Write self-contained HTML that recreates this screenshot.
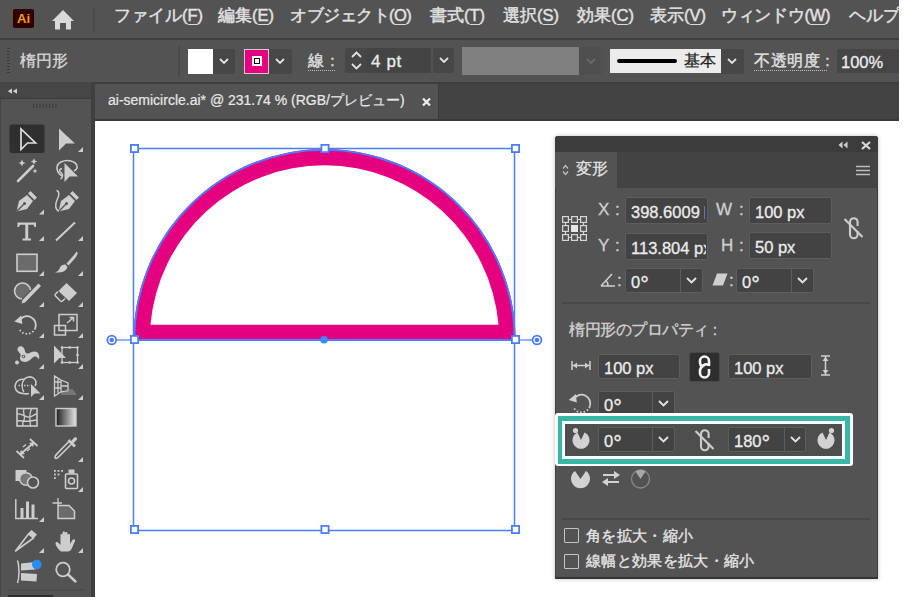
<!DOCTYPE html>
<html><head><meta charset="utf-8">
<style>
*{box-sizing:border-box;margin:0;padding:0}
html,body{width:922px;height:597px;overflow:hidden;background:#fff;font-family:"Liberation Sans",sans-serif;}
.a{position:absolute}
svg{display:block}
#menu{left:0;top:0;width:899px;height:39px;overflow:hidden;background:#535353;border-bottom:1px solid #414141}
.mi{position:absolute;top:5px;font-size:16.5px;color:#e2e2e2;white-space:nowrap;line-height:20px;-webkit-text-stroke:0.45px #e2e2e2;}
.mi u{text-decoration:none;border-bottom:1px solid #d8d8d8}
#ctrl{left:0;top:39px;width:899px;height:43px;background:#535353}
#tabrow{left:92px;top:82px;width:807px;height:39px;background:#434343}
#tab{left:95px;top:84px;width:344px;height:35px;background:#535353;border-right:1px solid #3a3a3a}
#tb{left:0;top:82px;width:91px;height:515px;background:#535353;border-left:1px solid #474747}
#tbgap{left:91px;top:82px;width:4px;height:515px;background:#3f3f3f}
#tbh{left:0;top:82px;width:91px;height:17px;background:#464646;border-bottom:1px solid #3d3d3d}
#canvas{left:95px;top:121px;width:827px;height:476px;background:#fff}
.fld{position:absolute;background:#474747;border:1px solid #4d4d4d;border-radius:2px;color:#e6e6e6;font-size:15px;line-height:24px;padding-left:6px;white-space:nowrap;overflow:hidden}
.dd{position:absolute;background:#474747;border:1px solid #4d4d4d;border-radius:2px}
.lbl{position:absolute;color:#cfcfcf;font-size:15px;white-space:nowrap}
#panel{left:555px;top:136px;width:323px;height:443px;background:#535353;border-radius:3px 3px 0 0;box-shadow:0 0 4px rgba(0,0,0,.25);border:1px solid #3e3e3e;border-bottom:2px solid #343434}
.ft{color:#ececec;white-space:nowrap;overflow:hidden;-webkit-text-stroke:0.3px #ececec}
.pl{color:#cfcfcf;font-size:17px;line-height:20px;white-space:nowrap;-webkit-text-stroke:0.3px #cfcfcf}
.dg{font-size:1.3em;line-height:0;position:relative;top:0.2em;margin-left:0px;-webkit-text-stroke:0.35px #ececec}
.pt{white-space:nowrap;-webkit-text-stroke:0.25px currentColor}
</style></head><body>
<div id="menu" class="a">
<div class="a" style="left:13px;top:9px;width:21px;height:19px;background:#300000;border-radius:2px;color:#ff9a00;font-weight:bold;font-size:13px;line-height:20px;text-align:center;letter-spacing:0px">Ai</div>
<svg class="a" style="left:51px;top:9px" width="24" height="21" viewBox="0 0 24 21"><path d="M12 1 L23 12 L20 12 L20 20.5 L15 20.5 L15 14 L9 14 L9 20.5 L4 20.5 L4 12 L1 12 Z" fill="#d9d9d9"/></svg>
<div class="a" style="left:93px;top:7px;width:2px;height:25px;background:#4a4a4a"></div>
<div class="mi" style="left:114px">ファイル(<u>F</u>)</div>
<div class="mi" style="left:218px">編集(<u>E</u>)</div>
<div class="mi" style="left:290px;letter-spacing:-0.5px">オブジェクト(<u>O</u>)</div>
<div class="mi" style="left:430px">書式(<u>T</u>)</div>
<div class="mi" style="left:503px">選択(<u>S</u>)</div>
<div class="mi" style="left:577px">効果(<u>C</u>)</div>
<div class="mi" style="left:650px">表示(<u>V</u>)</div>
<div class="mi" style="left:721px;letter-spacing:-0.3px">ウィンドウ(<u>W</u>)</div>
<div class="mi" style="left:849px">ヘルプ(<u>H</u>)</div>
</div>
<div id="ctrl" class="a">
<div class="a" style="left:7px;top:9px;width:3px;height:25px;background:repeating-linear-gradient(#3a3a3a 0 1.5px,#535353 1.5px 3px)"></div>
<div class="lbl" style="left:20px;top:12px;font-size:15.5px;color:#dadada;line-height:20px;-webkit-text-stroke:0.3px #dadada">楕円形</div>
<div class="a" style="left:178px;top:7px;width:2px;height:31px;background:#4a4a4a"></div>
<div class="a" style="left:188px;top:10px;width:25px;height:25px;background:#fff"></div>
<div class="dd" style="left:213px;top:10px;width:22px;height:25px;border:none;border-radius:0 2px 2px 0;padding:9px 0 0 6px"><svg width="10" height="6" viewBox="0 0 10 6"><path d="M1 1 L5 5 L9 1" fill="none" stroke="#e2e2e2" stroke-width="1.8"/></svg></div>
<div class="a" style="left:244px;top:10px;width:25px;height:25px;background:#e4007f;border:1px solid #cfcfcf"></div>
<div class="a" style="left:252px;top:17px;width:10px;height:10px;background:#fff;padding:2px"><div style="width:6px;height:6px;border:1.5px solid #111;background:#fff"></div></div>
<div class="dd" style="left:269px;top:10px;width:23px;height:25px;border:none;border-radius:0 2px 2px 0;padding:9px 0 0 6px"><svg width="10" height="6" viewBox="0 0 10 6"><path d="M1 1 L5 5 L9 1" fill="none" stroke="#e2e2e2" stroke-width="1.8"/></svg></div>
<div class="lbl" style="left:308px;top:12px;font-size:15.5px;color:#e0e0e0;line-height:20px;letter-spacing:1px;-webkit-text-stroke:0.4px #e0e0e0">線 :</div>
<div class="a" style="left:308px;top:31px;width:28px;height:1px;background:repeating-linear-gradient(90deg,#bdbdbd 0 1px,transparent 1px 2px)"></div>
<div class="dd" style="left:345px;top:9px;width:22px;height:25px;border:none;border-radius:2px 0 0 2px"><svg class="a" style="left:6px;top:3px" width="11" height="19" viewBox="0 0 11 19"><path d="M1 6 L5.5 1.5 L10 6 M1 13 L5.5 17.5 L10 13" fill="none" stroke="#e2e2e2" stroke-width="1.8"/></svg></div>
<div class="fld" style="left:367px;top:9px;width:64px;height:25px;border:none;background:#444;border-radius:0;line-height:27px;padding-left:4px;font-size:17px;letter-spacing:0.6px;color:#ececec;-webkit-text-stroke:0.3px #ececec">4 pt</div>
<div class="dd" style="left:433px;top:9px;width:21px;height:25px;border:none;padding:9px 0 0 6px"><svg width="10" height="6" viewBox="0 0 10 6"><path d="M1 1 L5 5 L9 1" fill="none" stroke="#e2e2e2" stroke-width="1.8"/></svg></div>
<div class="a" style="left:462px;top:8px;width:117px;height:28px;background:#808080"></div>
<div class="a" style="left:579px;top:8px;width:23px;height:28px;background:#4f4f4f;padding:11px 0 0 7px"><svg width="10" height="6" viewBox="0 0 10 6"><path d="M1 1 L5 5 L9 1" fill="none" stroke="#6a6a6a" stroke-width="1.8"/></svg></div>
<div class="a" style="left:610px;top:10px;width:111px;height:24px;background:#ececec"></div>
<div class="a" style="left:617px;top:20px;width:60px;height:4px;background:#000;border-radius:2px"></div>
<div class="lbl" style="left:684px;top:12px;font-size:15.5px;color:#1e1e1e;line-height:20px;-webkit-text-stroke:0.3px #1e1e1e">基本</div>
<div class="dd" style="left:721px;top:10px;width:23px;height:25px;border:none;border-radius:0 2px 2px 0;padding:9px 0 0 6px"><svg width="10" height="6" viewBox="0 0 10 6"><path d="M1 1 L5 5 L9 1" fill="none" stroke="#e2e2e2" stroke-width="1.8"/></svg></div>
<div class="lbl" style="left:754px;top:12px;font-size:15.5px;color:#e0e0e0;line-height:20px;letter-spacing:0.6px;-webkit-text-stroke:0.4px #e0e0e0">不透明度 :</div>
<div class="a" style="left:754px;top:31px;width:74px;height:1px;background:repeating-linear-gradient(90deg,#bdbdbd 0 1px,transparent 1px 2px)"></div>
<div class="fld" style="left:837px;top:10px;width:62px;height:24px;border:none;background:#464646;line-height:26px;padding-left:4px;font-size:16.5px;color:#ececec;-webkit-text-stroke:0.3px #ececec">100%</div>
</div>
<div class="a" style="left:0;top:38px;width:899px;height:2px;background:#3f3f3f"></div>
<div id="tabrow" class="a"></div>
<div id="tab" class="a">
<div class="a" style="left:13px;top:8px;font-size:14px;color:#e8e8e8;white-space:nowrap;line-height:16px;-webkit-text-stroke:0.2px #e8e8e8">ai-semicircle.ai* @ 231.74 % (RGB/プレビュー)</div>
<svg class="a" style="left:327px;top:14px" width="9" height="8" viewBox="0 0 9 8"><path d="M1 0.5 L8 7.5 M8 0.5 L1 7.5" stroke="#eeeeee" stroke-width="2.2"/></svg>
</div>
<div class="a" style="left:95px;top:119px;width:804px;height:2px;background:#393939"></div><div class="a" style="left:0;top:82px;width:899px;height:2px;background:#3e3e3e"></div>
<div id="tb" class="a"></div>
<div id="tbh" class="a"></div><div id="tbgap" class="a"></div>
<svg class="a" style="left:0;top:0" width="91" height="597" viewBox="0 0 91 597"><path d="M12 88.5 L7.8 91.2 L12 93.8 Z M17 88.5 L12.8 91.2 L17 93.8 Z" fill="#d0d0d0"/><g stroke="#3a3a3a" stroke-width="1"><line x1="33.5" y1="103.5" x2="33.5" y2="108"/><line x1="36.7" y1="103.5" x2="36.7" y2="108"/><line x1="39.9" y1="103.5" x2="39.9" y2="108"/><line x1="43.1" y1="103.5" x2="43.1" y2="108"/><line x1="46.3" y1="103.5" x2="46.3" y2="108"/><line x1="49.5" y1="103.5" x2="49.5" y2="108"/><line x1="52.7" y1="103.5" x2="52.7" y2="108"/><line x1="55.9" y1="103.5" x2="55.9" y2="108"/></g><line x1="8" y1="590" x2="84" y2="590" stroke="#474747" stroke-width="1"/><rect x="8" y="595" width="45" height="2" fill="#2e2e2e"/><rect x="9.5" y="124.5" width="35" height="28.5" rx="2.5" fill="#2f2f2f"/><path d="M21 129 L21 149.5 L27.5 143 L35.5 143 Z" fill="none" stroke="#dedede" stroke-width="1.7" stroke-linejoin="miter"/><path d="M59 128.5 L59 150.5 L66 143.5 L75 143.5 Z" fill="#cdcdcd"/><path d="M83 147 L83 152 L78 152 Z" fill="#cdcdcd"/><path d="M18 181 L33 166" stroke="#cdcdcd" stroke-width="2.6" stroke-linecap="round"/><path d="M22 159.5 L23.05 161.95 L25.5 163 L23.05 164.05 L22 166.5 L20.95 164.05 L18.5 163 L20.95 161.95 Z" fill="#cdcdcd"/><path d="M34 158.3 L34.96 160.54 L37.2 161.5 L34.96 162.46 L34 164.7 L33.04 162.46 L30.8 161.5 L33.04 160.54 Z" fill="#cdcdcd"/><path d="M35 168.5 L35.75 170.25 L37.5 171 L35.75 171.75 L35 173.5 L34.25 171.75 L32.5 171 L34.25 170.25 Z" fill="#cdcdcd"/><path d="M62 176 C56 172 55 165 61 162 C67 159 76 161 77 166 C77.5 168 76 170 74 171" fill="none" stroke="#cdcdcd" stroke-width="1.6"/><path d="M62 169 C59 168 59 172 61.5 173 C63 174 63 178 60.5 179" fill="none" stroke="#cdcdcd" stroke-width="1.5"/><path d="M64.5 163 L64.5 182 L69.5 176.5 L78 176.5 Z" fill="#cdcdcd"/><g transform="translate(16,190)"><path d="M0.5 21.5 L3 11 L11 5 L17 11 L11 19 Z" fill="#cdcdcd"/><path d="M12 3.5 L14.5 1 L21 7.5 L18.5 10 Z" fill="#cdcdcd"/><path d="M0.8 21.2 L8 14" stroke="#535353" stroke-width="1.3"/><circle cx="8.5" cy="13.5" r="1.5" fill="#535353"/></g><path d="M44 209.5 L44 214.5 L39 214.5 Z" fill="#cdcdcd"/><g transform="translate(58,190)"><path d="M0.5 21.5 L3 11 L11 5 L17 11 L11 19 Z" fill="#cdcdcd"/><path d="M12 3.5 L14.5 1 L21 7.5 L18.5 10 Z" fill="#cdcdcd"/><path d="M0.8 21.2 L8 14" stroke="#535353" stroke-width="1.3"/><circle cx="8.5" cy="13.5" r="1.5" fill="#535353"/><path d="M-1.5 0.5 C2 1 1 6 -1 10 C-3 14 -3 20 1 21" fill="none" stroke="#cdcdcd" stroke-width="1.5"/></g><path d="M17.5 222.5 H36 V227 H34.5 L33.5 224.8 H28.2 V238.5 H31 V240.5 H22.5 V238.5 H25.3 V224.8 H20 L19 227 H17.5 Z" fill="#cdcdcd"/><path d="M44 236 L44 241 L39 241 Z" fill="#cdcdcd"/><path d="M56 240.5 L75 222.5" stroke="#cdcdcd" stroke-width="2"/><path d="M83 236 L83 241 L78 241 Z" fill="#cdcdcd"/><rect x="17" y="254.3" width="20" height="17" fill="#6b6b6b" stroke="#cdcdcd" stroke-width="1.6"/><path d="M44 271 L44 276 L39 276 Z" fill="#cdcdcd"/><path d="M76.5 251.5 C75 254 70 260 66.5 263.5 L68.5 265.5 C72 262 77.5 256 77.8 253 Z" fill="#cdcdcd"/><path d="M65.5 264.5 C62 264 60 266.5 59.5 268.5 C59 270.5 57 271.5 55 272.5 C60 273 66 272 67.5 267 Z" fill="#cdcdcd"/><path d="M83 271 L83 276 L78 276 Z" fill="#cdcdcd"/><path d="M22 299 A8 8 0 1 1 30.5 290" fill="#6b6b6b" stroke="#cdcdcd" stroke-width="1.6"/><path d="M38.5 283.5 L41 286 L25 302.5 L21.5 303.5 L22.5 300 Z" fill="#cdcdcd"/><path d="M44 302 L44 307 L39 307 Z" fill="#cdcdcd"/><path d="M66.5 283 L77 293 L69 301 L58.5 291 Z" fill="#cdcdcd"/><path d="M58 291.5 L55.5 294 C55 294.5 55 295.5 55.5 296 L60.5 301 C61 301.5 62 301.5 62.5 301 L65 298.5" fill="none" stroke="#cdcdcd" stroke-width="1.5"/><path d="M83 302 L83 307 L78 307 Z" fill="#cdcdcd"/><path d="M19.79 319.95 A8.8 8.8 0 0 1 35.27 328.01" fill="none" stroke="#cfcfcf" stroke-width="1.8"/><path d="M35.27 328.01 A8.8 8.8 0 0 1 19.79 330.05" fill="none" stroke="#cfcfcf" stroke-width="1.8" stroke-dasharray="1.6 1.9"/><path d="M14.29 321.45 L21.29 315.45 L22.29 323.95 Z" fill="#cfcfcf"/><path d="M44 333 L44 338 L39 338 Z" fill="#cdcdcd"/><rect x="54.5" y="325.5" width="11" height="9.5" fill="none" stroke="#cdcdcd" stroke-width="1.5"/><rect x="59" y="314.5" width="18" height="16" fill="none" stroke="#cdcdcd" stroke-width="1.5"/><path d="M67 323 L73.5 317.5 M69.5 317.5 H73.5 V321.5" fill="none" stroke="#cdcdcd" stroke-width="1.5"/><path d="M83 333 L83 338 L78 338 Z" fill="#cdcdcd"/><path d="M17.5 350 C17 346.5 21 345 23.5 347.5 C25 349 24.5 351.5 26 353 C28 355 31 351.5 34.5 351.5 C38 351.5 40 355 39 359.5 C38 357.5 36.5 356 34.5 356.5 C31.5 357.5 29.5 362 25 362 C21 362 19 359 20.5 356 C21.5 354 19 353 17.5 350 Z" fill="#cdcdcd"/><circle cx="23.5" cy="356.5" r="1.8" fill="#535353"/><circle cx="23.5" cy="356.5" r="0.9" fill="#cdcdcd"/><circle cx="17" cy="362.5" r="2" fill="#cdcdcd"/><path d="M44 364 L44 369 L39 369 Z" fill="#cdcdcd"/><path d="M54 345.5 L54 363.5 L59.5 358 L66 358 Z" fill="#cdcdcd"/><rect x="62" y="347.5" width="15.5" height="15" fill="none" stroke="#cdcdcd" stroke-width="1.3"/><circle cx="62" cy="347.5" r="1.3" fill="#cdcdcd"/><circle cx="77.5" cy="347.5" r="1.3" fill="#cdcdcd"/><circle cx="62" cy="362.5" r="1.3" fill="#cdcdcd"/><circle cx="77.5" cy="362.5" r="1.3" fill="#cdcdcd"/><circle cx="69.7" cy="347.5" r="1.3" fill="#cdcdcd"/><circle cx="77.5" cy="355" r="1.3" fill="#cdcdcd"/><circle cx="69.7" cy="362.5" r="1.3" fill="#cdcdcd"/><path d="M83 364 L83 369 L78 369 Z" fill="#cdcdcd"/><path d="M29 393.5 C27 394 25 394 23 393.5 C16 393 14 388 15.5 384 C17 380 21 378.5 24 379.5 C26 376.5 31 376 34 378.5 C36.5 380.5 36.5 384 35 386" fill="none" stroke="#cdcdcd" stroke-width="1.6"/><path d="M24 380 C21.5 382 21.5 389 24 392" fill="none" stroke="#cdcdcd" stroke-width="1.2"/><path d="M18.5 385.5 H30" stroke="#cdcdcd" stroke-width="1.4" stroke-dasharray="1.4 1.4"/><path d="M31 384 L31 397 L34.5 393.5 L40.5 393.5 Z" fill="#cdcdcd"/><path d="M44 395 L44 400 L39 400 Z" fill="#cdcdcd"/><path d="M54.5 376 L54.5 396 L61 392 L61 380 Z M54.5 382 H61 M54.5 388 H61 M58 378 V394 M61 380 L68 383 V391 L61 392 M61 386 H68" fill="none" stroke="#cdcdcd" stroke-width="1.3"/><path d="M61 394 H76 M66 390 H73 M64 392 H75" stroke="#9a9a9a" stroke-width="1.2"/><path d="M83 395 L83 400 L78 400 Z" fill="#cdcdcd"/><rect x="17" y="408.5" width="20" height="17.5" fill="none" stroke="#cdcdcd" stroke-width="1.6"/><path d="M17 414 C23 413 25 418 30 417 C33 416 35 414 37 414 M24 408.5 C22 413 26 417 24 420 C22.5 422 22.5 424 23 426 M32 408.5 C29 412 30 417 30 421 L30.5 426 M17 421 C21 420 25 422 30 421 L37 420" fill="none" stroke="#cdcdcd" stroke-width="1.3"/><defs><linearGradient id="gr" x1="0" x2="1"><stop offset="0" stop-color="#1e1e1e"/><stop offset="1" stop-color="#e6e6e6"/></linearGradient></defs><rect x="56" y="408.5" width="20" height="17.5" fill="url(#gr)" stroke="#cdcdcd" stroke-width="1.4"/><path d="M16.5 451 L24 458 M30 439 L37.5 446 M20 454.5 L34 442.5" fill="none" stroke="#cdcdcd" stroke-width="1.8"/><path d="M34.5 442 L29 443 L33 447 Z M19.5 455 L25 454 L21 450 Z" fill="#cdcdcd"/><path d="M23 447 L26 444.5 M27 451 L30 448.5" stroke="#cdcdcd" stroke-width="1.3"/><path d="M71 444.5 L58 457.5 C56.5 459 55 458.5 55 457 C55 455.5 56 454.5 69 441.5" fill="none" stroke="#cdcdcd" stroke-width="1.7"/><path d="M67.5 441 L74 447.5 L76 445.5 L73.5 443 L77 439.5 C77.5 438 76 436.5 74.5 437.5 L71 441 L69.5 439 Z" fill="#cdcdcd"/><path d="M83 457 L83 462 L78 462 Z" fill="#cdcdcd"/><rect x="15.5" y="470" width="11" height="11" fill="#cdcdcd"/><circle cx="26" cy="479" r="6.3" fill="#777" stroke="#cdcdcd" stroke-width="1.4"/><circle cx="33" cy="482.5" r="5.5" fill="#535353" stroke="#cdcdcd" stroke-width="1.6"/><rect x="54.0" y="470.0" width="1.8" height="1.8" fill="#cdcdcd"/><rect x="57.6" y="470.0" width="1.8" height="1.8" fill="#cdcdcd"/><rect x="61.2" y="470.0" width="1.8" height="1.8" fill="#cdcdcd"/><rect x="54.0" y="473.6" width="1.8" height="1.8" fill="#cdcdcd"/><rect x="57.6" y="473.6" width="1.8" height="1.8" fill="#cdcdcd"/><rect x="54.0" y="477.2" width="1.8" height="1.8" fill="#cdcdcd"/><rect x="65.5" y="474" width="12" height="14.5" rx="1" fill="none" stroke="#cdcdcd" stroke-width="1.6"/><rect x="68.5" y="469.5" width="6" height="4" fill="#cdcdcd"/><circle cx="71.5" cy="481" r="3" fill="none" stroke="#cdcdcd" stroke-width="1.6"/><path d="M83 487 L83 492 L78 492 Z" fill="#cdcdcd"/><path d="M15.8 499 V518.5 H38" fill="none" stroke="#cdcdcd" stroke-width="1.5"/><rect x="20.5" y="508" width="3" height="10" fill="#cdcdcd"/><rect x="26" y="501.5" width="3" height="16.5" fill="#cdcdcd"/><rect x="31.5" y="504.5" width="3" height="13.5" fill="#cdcdcd"/><path d="M44 517 L44 522 L39 522 Z" fill="#cdcdcd"/><path d="M58 498 V505 M52.5 503 H62" stroke="#cdcdcd" stroke-width="1.3"/><path d="M58 505.5 H69 L74.5 511 V518.5 H58 Z" fill="#6b6b6b" stroke="#cdcdcd" stroke-width="1.5"/><path d="M15.5 551 L28.5 534 L33.5 538 Z" fill="none" stroke="#cdcdcd" stroke-width="1.6" stroke-linejoin="round"/><path d="M28 533.5 L31.5 530 L37 534.5 L33.5 538.5 Z" fill="#cdcdcd"/><path d="M44 548 L44 553 L39 553 Z" fill="#cdcdcd"/><path d="M61 551.5 C58 549 55.5 545 55.5 543.5 C55.5 542 57 541.5 58.5 543 L60.5 545 V535 C60.5 533.5 62.5 533.5 62.5 535 V541 V532.5 C62.5 531 65 531 65 532.5 V541 V533 C65 531.5 67.5 531.5 67.5 533 V541 V535 C67.5 533.5 70 533.5 70 535 V544 L72.5 540 C73.5 538.5 75.5 539 75 541 L71.5 549 C70.5 551 69 551.5 67 551.5 Z" fill="#cdcdcd"/><path d="M83 548 L83 553 L78 553 Z" fill="#cdcdcd"/><path d="M17.5 560.5 C19.5 566 19.5 577 17.5 583" fill="none" stroke="#cdcdcd" stroke-width="1.5"/><path d="M21 563.5 L35 562 L35.5 569.5 L21 570.5 Z M21 573 L37 574 L36.5 581.5 L21 580.5 Z" fill="#cdcdcd"/><circle cx="36.8" cy="564.5" r="4.8" fill="#2b8ded"/><circle cx="63" cy="569.5" r="6.8" fill="none" stroke="#cdcdcd" stroke-width="1.8"/><path d="M68 574.5 L75.5 581.5" stroke="#cdcdcd" stroke-width="2.4" stroke-linecap="round"/></svg>
<div id="canvas" class="a"></div>
<svg class="a" style="left:0;top:0" width="922" height="597" viewBox="0 0 922 597">
<path d="M133.5,340 A191,191 0 0 1 515.5,340 Z M150.46,324.8 A174.7,174.7 0 0 1 498.54,324.8 Z" fill="#e4007f" fill-rule="evenodd"/>
<path d="M134.3,340 A190.2,190.2 0 0 1 514.7,340 Z" fill="none" stroke="#4d7cff" stroke-width="1.8"/>
<rect x="133.5" y="148.5" width="381" height="382" fill="none" stroke="#4d7cff" stroke-width="1.5"/>
<line x1="112" y1="340" x2="134" y2="340" stroke="#4d7cff" stroke-width="1.2"/>
<line x1="515" y1="340" x2="537" y2="340" stroke="#4d7cff" stroke-width="1.2"/>
<circle cx="111.7" cy="340" r="4.4" fill="#fff" stroke="#4d7cff" stroke-width="1.8"/><circle cx="111.7" cy="340" r="2.3" fill="#4d7cff"/>
<circle cx="537" cy="340" r="4.4" fill="#fff" stroke="#4d7cff" stroke-width="1.8"/><circle cx="537" cy="340" r="2.3" fill="#4d7cff"/>
<circle cx="324" cy="339.8" r="3.8" fill="#3f86ff"/>
<rect x="130.9" y="144.9" width="7.2" height="7.2" fill="#fff" stroke="#4d7cff" stroke-width="1.8"/><rect x="130.9" y="335.9" width="7.2" height="7.2" fill="#fff" stroke="#4d7cff" stroke-width="1.8"/><rect x="130.9" y="525.9" width="7.2" height="7.2" fill="#fff" stroke="#4d7cff" stroke-width="1.8"/><rect x="321.4" y="144.9" width="7.2" height="7.2" fill="#fff" stroke="#4d7cff" stroke-width="1.8"/><rect x="321.4" y="525.9" width="7.2" height="7.2" fill="#fff" stroke="#4d7cff" stroke-width="1.8"/><rect x="511.9" y="144.9" width="7.2" height="7.2" fill="#fff" stroke="#4d7cff" stroke-width="1.8"/><rect x="511.9" y="335.9" width="7.2" height="7.2" fill="#fff" stroke="#4d7cff" stroke-width="1.8"/><rect x="511.9" y="525.9" width="7.2" height="7.2" fill="#fff" stroke="#4d7cff" stroke-width="1.8"/>
</svg>
<div id="panel" class="a"></div>
<div class="a" style="left:555px;top:136px;width:323px;height:16px;background:#3c3c3c;border-radius:3px 3px 0 0"></div><svg class="a" style="left:838px;top:141px" width="10" height="8" viewBox="0 0 10 8"><path d="M4.5 0.5 L0.5 4 L4.5 7.5 Z M9.5 0.5 L5.5 4 L9.5 7.5 Z" fill="#cfcfcf"/></svg><svg class="a" style="left:861px;top:141px" width="10" height="9" viewBox="0 0 10 9"><path d="M1 1 L9 8 M9 1 L1 8" stroke="#d8d8d8" stroke-width="2.3"/></svg><div class="a" style="left:555px;top:152px;width:323px;height:36px;background:#434343"></div><div class="a" style="left:555px;top:152px;width:62px;height:36px;background:#535353"></div><svg class="a" style="left:562px;top:164px" width="7" height="12" viewBox="0 0 7 12"><path d="M1 4.5 L3.5 1.5 L6 4.5 M1 7.5 L3.5 10.5 L6 7.5" fill="none" stroke="#bdbdbd" stroke-width="1.3"/></svg><div class="a pt" style="left:576px;top:159px;font-size:15.5px;line-height:20px;color:#e6e6e6">変形</div><svg class="a" style="left:856px;top:165px" width="14" height="11" viewBox="0 0 14 11"><path d="M0 1.5 H14 M0 5.5 H14 M0 9.5 H14" stroke="#bdbdbd" stroke-width="1.4"/></svg><svg class="a" style="left:561px;top:215px" width="28" height="27" viewBox="0 0 28 27"><rect x="1.6" y="1.6" width="5.8" height="5.8" fill="none" stroke="#d6d6d6" stroke-width="1.2"/><rect x="1.6" y="10.6" width="5.8" height="5.8" fill="none" stroke="#d6d6d6" stroke-width="1.2"/><rect x="1.6" y="19.6" width="5.8" height="5.8" fill="none" stroke="#d6d6d6" stroke-width="1.2"/><rect x="10.6" y="1.6" width="5.8" height="5.8" fill="none" stroke="#d6d6d6" stroke-width="1.2"/><rect x="10" y="10" width="7" height="7" fill="#e6e6e6"/><rect x="10.6" y="19.6" width="5.8" height="5.8" fill="none" stroke="#d6d6d6" stroke-width="1.2"/><rect x="19.6" y="1.6" width="5.8" height="5.8" fill="none" stroke="#d6d6d6" stroke-width="1.2"/><rect x="19.6" y="10.6" width="5.8" height="5.8" fill="none" stroke="#d6d6d6" stroke-width="1.2"/><rect x="19.6" y="19.6" width="5.8" height="5.8" fill="none" stroke="#d6d6d6" stroke-width="1.2"/><path d="M8 4.5 H10 M17 4.5 H19 M8 22.5 H10 M17 22.5 H19 M4.5 8 V10 M4.5 17 V19 M22.5 8 V10 M22.5 17 V19" stroke="#d6d6d6" stroke-width="1.2"/></svg><div class="a pl" style="left:598px;top:200px">X</div><div class="a pl" style="left:615px;top:200px">:</div><div class="a pl" style="left:598px;top:236px">Y</div><div class="a pl" style="left:615px;top:236px">:</div><div class="a" style="left:625px;top:197px;width:83px;height:27px;background:#434343;border:1px solid #5d5d5d;border-radius:2px"></div><div class="a ft" style="left:631px;top:200px;width:75px;height:23px;line-height:25px;font-size:16.5px">398.6009</div><div class="a" style="left:704px;top:206px;width:1px;height:13px;background:#6b6bd0"></div><div class="a" style="left:625px;top:233px;width:83px;height:27px;background:#434343;border:1px solid #5d5d5d;border-radius:2px"></div><div class="a ft" style="left:631px;top:236px;width:75px;height:23px;line-height:25px;font-size:16.5px">113.804 px</div><div class="a pl" style="left:716px;top:200px">W</div><div class="a pl" style="left:739px;top:200px">:</div><div class="a pl" style="left:721px;top:236px">H</div><div class="a pl" style="left:739px;top:236px">:</div><div class="a" style="left:749px;top:197px;width:83px;height:27px;background:#434343;border:1px solid #5d5d5d;border-radius:2px"></div><div class="a ft" style="left:755px;top:200px;width:75px;height:23px;line-height:25px;font-size:16.5px">100 px</div><div class="a" style="left:749px;top:232px;width:83px;height:27px;background:#434343;border:1px solid #5d5d5d;border-radius:2px"></div><div class="a ft" style="left:755px;top:235px;width:75px;height:23px;line-height:25px;font-size:16.5px">50 px</div><svg class="a" style="left:843px;top:216px" width="22" height="24" viewBox="0 0 22 24"><path d="M7 12 V6 A3.8 3.8 0 0 1 14.6 6 V10 M7 12 V18.5 A3.8 3.8 0 0 0 14.6 18.5 V15" fill="none" stroke="#cdcdcd" stroke-width="2.1"/><path d="M1.5 3 L19.5 21" stroke="#cdcdcd" stroke-width="2.1"/></svg><svg class="a" style="left:600px;top:272px" width="17" height="15" viewBox="0 0 17 15"><path d="M1 14 L15 14 M1 14 L12 2 M8 14 A7 7 0 0 0 6 8.5" fill="none" stroke="#cfcfcf" stroke-width="1.5"/></svg><div class="a pl" style="left:617px;top:271px">:</div><div class="a" style="left:625px;top:268px;width:78px;height:25px;background:#434343;border:1px solid #5d5d5d;border-radius:2px"></div><div class="a ft" style="left:631px;top:271px;width:47px;height:21px;line-height:23px;font-size:16.5px">0<span class=dg>°</span></div><div class="a" style="left:680px;top:269px;width:1px;height:23px;background:#5d5d5d"></div><svg class="a" style="left:686px;top:277px" width="11" height="7" viewBox="0 0 11 7"><path d="M1 1 L5.5 5.5 L10 1" fill="none" stroke="#e2e2e2" stroke-width="1.9"/></svg><svg class="a" style="left:712px;top:273px" width="16" height="13" viewBox="0 0 16 13"><path d="M5 0.5 H15.5 L11 12.5 H0.5 Z" fill="#cfcfcf"/></svg><div class="a pl" style="left:729px;top:271px">:</div><div class="a" style="left:736px;top:268px;width:78px;height:25px;background:#434343;border:1px solid #5d5d5d;border-radius:2px"></div><div class="a ft" style="left:742px;top:271px;width:47px;height:21px;line-height:23px;font-size:16.5px">0<span class=dg>°</span></div><div class="a" style="left:791px;top:269px;width:1px;height:23px;background:#5d5d5d"></div><svg class="a" style="left:797px;top:277px" width="11" height="7" viewBox="0 0 11 7"><path d="M1 1 L5.5 5.5 L10 1" fill="none" stroke="#e2e2e2" stroke-width="1.9"/></svg><div class="a" style="left:562px;top:302px;width:308px;height:2px;background:#474747"></div><div class="a pt" style="left:569px;top:320px;font-size:15.5px;line-height:20px;color:#d0d0d0;letter-spacing:-0.45px;-webkit-text-stroke:0.35px #d0d0d0">楕円形のプロパティ :</div><svg class="a" style="left:571px;top:360px" width="20" height="11" viewBox="0 0 20 11"><path d="M1 1 V10 M19 1 V10 M1 5.5 H19" stroke="#cfcfcf" stroke-width="1.5"/><path d="M2 5.5 L6 2.5 V8.5 Z M18 5.5 L14 2.5 V8.5 Z" fill="#cfcfcf"/></svg><div class="a" style="left:598px;top:354px;width:82px;height:25px;background:#434343;border:1px solid #5d5d5d;border-radius:2px"></div><div class="a ft" style="left:604px;top:357px;width:74px;height:21px;line-height:23px;font-size:16.5px">100 px</div><div class="a" style="left:689px;top:352px;width:31px;height:30px;background:#2e2e2e;border:1px solid #484848;border-radius:3px"></div><svg class="a" style="left:696px;top:354px" width="16" height="26" viewBox="0 0 16 26"><path d="M6.5 13 C4.5 12 4 10.5 4 8 V7 A4.5 4.5 0 0 1 13 7 V12" fill="none" stroke="#f4f4f4" stroke-width="2.6"/><path d="M12.5 11 C11 10 10 10 9 10.5 C6 12 4 14.5 4 17 V19 A4.5 4.5 0 0 0 13 19 V15" fill="none" stroke="#f4f4f4" stroke-width="2.6"/></svg><div class="a" style="left:728px;top:354px;width:84px;height:25px;background:#434343;border:1px solid #5d5d5d;border-radius:2px"></div><div class="a ft" style="left:734px;top:357px;width:76px;height:21px;line-height:23px;font-size:16.5px">100 px</div><svg class="a" style="left:820px;top:355px" width="11" height="21" viewBox="0 0 11 21"><path d="M1 1 H10 M1 20 H10 M5.5 1 V20" stroke="#cfcfcf" stroke-width="1.5"/><path d="M5.5 2 L2.5 6 H8.5 Z M5.5 19 L2.5 15 H8.5 Z" fill="#cfcfcf"/></svg><svg class="a" style="left:568px;top:391px" width="25" height="25" viewBox="0 0 25 25"><path d="M6.29 7.45 A8.8 8.8 0 0 1 21.77 15.51" fill="none" stroke="#cfcfcf" stroke-width="1.8"/><path d="M21.77 15.51 A8.8 8.8 0 0 1 6.29 17.55" fill="none" stroke="#cfcfcf" stroke-width="1.8" stroke-dasharray="1.6 1.9"/><path d="M0.79 8.95 L7.79 2.95 L8.79 11.45 Z" fill="#cfcfcf"/></svg><div class="a" style="left:598px;top:391px;width:77px;height:25px;background:#434343;border:1px solid #5d5d5d;border-radius:2px"></div><div class="a ft" style="left:604px;top:394px;width:46px;height:21px;line-height:23px;font-size:16.5px">0<span class=dg>°</span></div><div class="a" style="left:652px;top:392px;width:1px;height:23px;background:#5d5d5d"></div><svg class="a" style="left:658px;top:400px" width="11" height="7" viewBox="0 0 11 7"><path d="M1 1 L5.5 5.5 L10 1" fill="none" stroke="#e2e2e2" stroke-width="1.9"/></svg><div class="a" style="left:555px;top:413px;width:298px;height:53px;background:#fff;border-radius:3px"></div><div class="a" style="left:558px;top:416px;width:292px;height:48px;background:#38b6a6"></div><div class="a" style="left:562px;top:421px;width:283px;height:38px;background:#fff"></div><div class="a" style="left:565px;top:424px;width:277px;height:32px;background:#4e4e4e"></div><svg class="a" style="left:571px;top:427px" width="20" height="23" viewBox="0 0 20 23"><path d="M10 13 L6.5 5.5 A8.5 8.5 0 1 0 13.5 5.5 Z" fill="#d2d2d2"/><circle cx="4.5" cy="3.5" r="2.6" fill="#d2d2d2"/></svg><div class="a" style="left:598px;top:427px;width:77px;height:25px;background:#434343;border:1px solid #5d5d5d;border-radius:2px"></div><div class="a ft" style="left:604px;top:430px;width:46px;height:21px;line-height:23px;font-size:16.5px">0<span class=dg>°</span></div><div class="a" style="left:652px;top:428px;width:1px;height:23px;background:#5d5d5d"></div><svg class="a" style="left:658px;top:436px" width="11" height="7" viewBox="0 0 11 7"><path d="M1 1 L5.5 5.5 L10 1" fill="none" stroke="#e2e2e2" stroke-width="1.9"/></svg><svg class="a" style="left:694px;top:428px" width="22" height="24" viewBox="0 0 22 24"><path d="M7 12 V6 A3.8 3.8 0 0 1 14.6 6 V10 M7 12 V18.5 A3.8 3.8 0 0 0 14.6 18.5 V15" fill="none" stroke="#cdcdcd" stroke-width="2.1"/><path d="M1.5 3 L19.5 21" stroke="#cdcdcd" stroke-width="2.1"/></svg><div class="a" style="left:728px;top:427px;width:78px;height:25px;background:#434343;border:1px solid #5d5d5d;border-radius:2px"></div><div class="a ft" style="left:734px;top:430px;width:48px;height:21px;line-height:23px;font-size:16.5px">180<span class=dg>°</span></div><div class="a" style="left:784px;top:428px;width:1px;height:23px;background:#5d5d5d"></div><svg class="a" style="left:790px;top:436px" width="11" height="7" viewBox="0 0 11 7"><path d="M1 1 L5.5 5.5 L10 1" fill="none" stroke="#e2e2e2" stroke-width="1.9"/></svg><svg class="a" style="left:816px;top:427px" width="20" height="23" viewBox="0 0 20 23"><path d="M10 13 L6.5 5.5 A8.5 8.5 0 1 0 13.5 5.5 Z" fill="#d2d2d2" transform="scale(-1,1) translate(-20,0)"/><circle cx="15.5" cy="3.5" r="2.6" fill="#d2d2d2"/></svg><svg class="a" style="left:570px;top:469px" width="21" height="20" viewBox="0 0 21 20"><path d="M10.5 10 L5 2 A9.5 9.5 0 1 0 16 2 Z" fill="#d2d2d2"/></svg><svg class="a" style="left:601px;top:470px" width="20" height="17" viewBox="0 0 20 17"><path d="M2 5 H16 M18 12 H4" stroke="#d2d2d2" stroke-width="2.2"/><path d="M19 5 L13 1 V9 Z M1 12 L7 8 V16 Z" fill="#d2d2d2"/></svg><svg class="a" style="left:630px;top:469px" width="21" height="20" viewBox="0 0 21 20"><circle cx="10.5" cy="10" r="9" fill="none" stroke="#8a8a8a" stroke-width="1.3"/><path d="M10.5 10 L5.5 2.5 A9 9 0 0 1 15.5 2.5 Z" fill="#a8a8a8"/></svg><div class="a" style="left:562px;top:518px;width:308px;height:2px;background:#474747"></div><div class="a" style="left:564px;top:528px;width:15px;height:15px;border:1.5px solid #c4c4c4;border-radius:1px"></div><div class="a pt" style="left:586px;top:526px;font-size:15.3px;line-height:20px;letter-spacing:0.35px;color:#e6e6e6;-webkit-text-stroke:0.35px #e6e6e6">角を拡大・縮小</div><div class="a" style="left:564px;top:554px;width:15px;height:15px;border:1.5px solid #c4c4c4;border-radius:1px"></div><div class="a pt" style="left:586px;top:551px;font-size:15.3px;line-height:20px;letter-spacing:0.35px;color:#e6e6e6;-webkit-text-stroke:0.35px #e6e6e6">線幅と効果を拡大・縮小</div>
</body></html>
